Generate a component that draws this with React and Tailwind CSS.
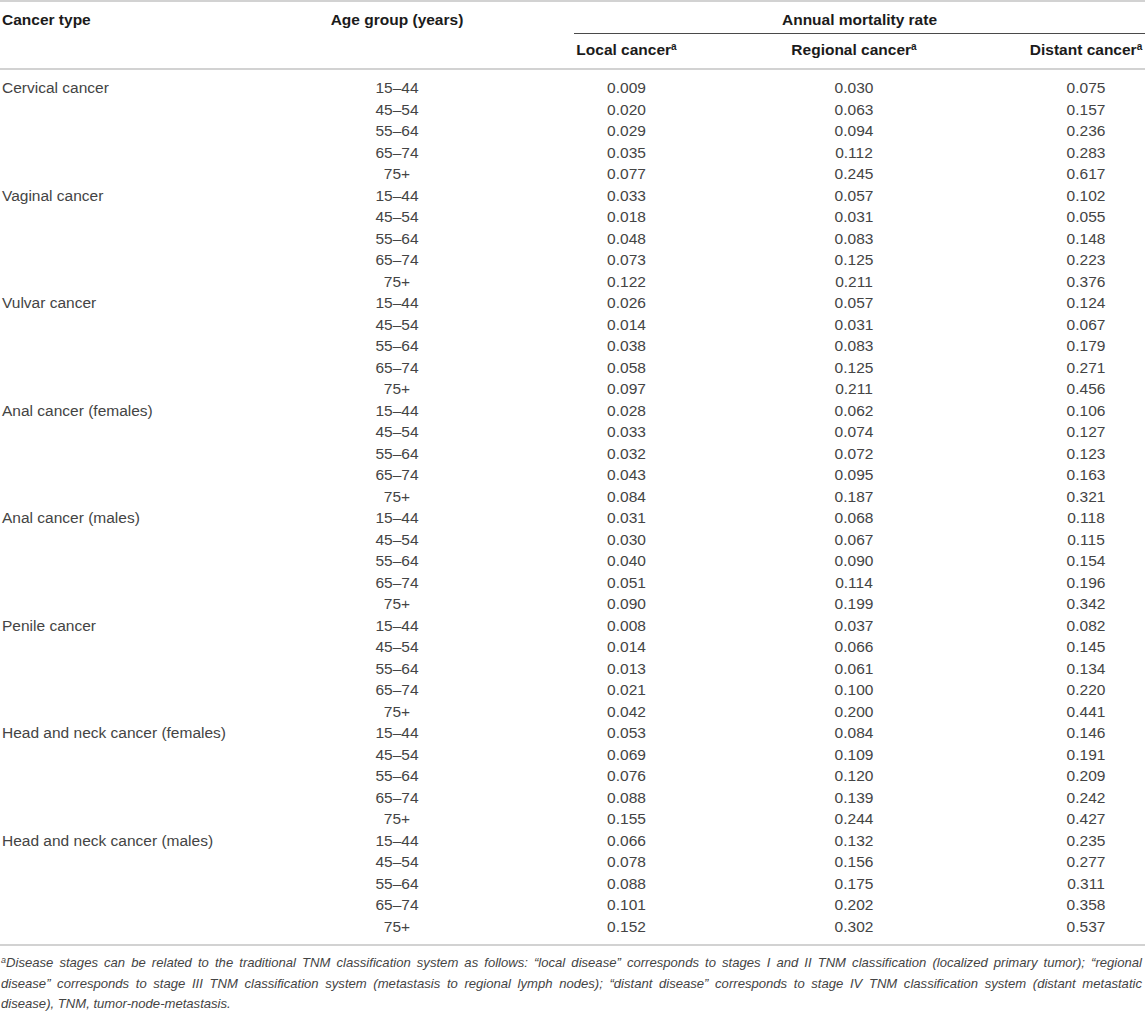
import React from "react";

const groups = [
  ["Cervical cancer", [
    ["0.009", "0.030", "0.075"], ["0.020", "0.063", "0.157"], ["0.029", "0.094", "0.236"], ["0.035", "0.112", "0.283"], ["0.077", "0.245", "0.617"]]],
  ["Vaginal cancer", [
    ["0.033", "0.057", "0.102"], ["0.018", "0.031", "0.055"], ["0.048", "0.083", "0.148"], ["0.073", "0.125", "0.223"], ["0.122", "0.211", "0.376"]]],
  ["Vulvar cancer", [
    ["0.026", "0.057", "0.124"], ["0.014", "0.031", "0.067"], ["0.038", "0.083", "0.179"], ["0.058", "0.125", "0.271"], ["0.097", "0.211", "0.456"]]],
  ["Anal cancer (females)", [
    ["0.028", "0.062", "0.106"], ["0.033", "0.074", "0.127"], ["0.032", "0.072", "0.123"], ["0.043", "0.095", "0.163"], ["0.084", "0.187", "0.321"]]],
  ["Anal cancer (males)", [
    ["0.031", "0.068", "0.118"], ["0.030", "0.067", "0.115"], ["0.040", "0.090", "0.154"], ["0.051", "0.114", "0.196"], ["0.090", "0.199", "0.342"]]],
  ["Penile cancer", [
    ["0.008", "0.037", "0.082"], ["0.014", "0.066", "0.145"], ["0.013", "0.061", "0.134"], ["0.021", "0.100", "0.220"], ["0.042", "0.200", "0.441"]]],
  ["Head and neck cancer (females)", [
    ["0.053", "0.084", "0.146"], ["0.069", "0.109", "0.191"], ["0.076", "0.120", "0.209"], ["0.088", "0.139", "0.242"], ["0.155", "0.244", "0.427"]]],
  ["Head and neck cancer (males)", [
    ["0.066", "0.132", "0.235"], ["0.078", "0.156", "0.277"], ["0.088", "0.175", "0.311"], ["0.101", "0.202", "0.358"], ["0.152", "0.302", "0.537"]]],
];

const ages = ["15\u201344", "45\u201354", "55\u201364", "65\u201374", "75+"];

const cols = "grid grid-cols-[222px_350px_109px_346px_118px]";

function Sup() {
  return <sup className="text-[10px] leading-none">a</sup>;
}

export default function App() {
  return (
    <div className="w-[1145px] bg-white font-['Liberation_Sans',Arial,sans-serif] text-[15.5px]">
      <div className="border-t-2 border-[#d2d2d2]">
        <div className={`${cols} grid-rows-[auto_auto] border-b-2 border-[#d2d2d2] font-bold text-[#1b1b1b]`}>
          <div className="row-span-2 col-start-1 row-start-1 pl-[2px] pt-[7px] leading-[21.5px]">Cancer type</div>
          <div className="row-span-2 col-start-2 row-start-1 text-center pt-[7px] leading-[21.5px]">Age group (years)</div>
          <div className="col-start-3 col-span-3 row-start-1 pl-[2px]">
            <div className="border-b border-[#4a4a4a] text-center pt-[7px] pb-[2px] leading-[21.5px]">Annual mortality rate</div>
          </div>
          <div className="col-start-3 row-start-2 text-center pt-[5px] pb-[8px] leading-[21.5px] whitespace-nowrap">Local cancer<Sup /></div>
          <div className="col-start-4 row-start-2 text-center pt-[5px] pb-[8px] leading-[21.5px] whitespace-nowrap">Regional cancer<Sup /></div>
          <div className="col-start-5 row-start-2 text-center pt-[5px] pb-[8px] leading-[21.5px] whitespace-nowrap">Distant cancer<Sup /></div>
        </div>
        <div className="pt-[7px] pb-[7px] border-b-2 border-[#d2d2d2] text-[#444]">
          {groups.map(([name, rows]) =>
            rows.map((r, i) => (
              <div key={name + i} className={`${cols} leading-[21.5px] h-[21.5px]`}>
                <div className="pl-[2px] whitespace-nowrap">{i === 0 ? name : ""}</div>
                <div className="text-center">{ages[i]}</div>
                <div className="text-center">{r[0]}</div>
                <div className="text-center">{r[1]}</div>
                <div className="text-center">{r[2]}</div>
              </div>
            ))
          )}
        </div>
        <div className="pt-[7px] pl-[1px] pr-[3px] italic text-[13.1px] leading-[20.5px] text-[#444]">
          <div className="whitespace-nowrap text-justify [text-align-last:justify]">
            <sup className="text-[9px] leading-none">a</sup>Disease stages can be related to the traditional TNM classification system as follows: “local disease” corresponds to stages I and II TNM classification (localized primary tumor); “regional
          </div>
          <div className="whitespace-nowrap text-justify [text-align-last:justify]">
            disease” corresponds to stage III TNM classification system (metastasis to regional lymph nodes); “distant disease” corresponds to stage IV TNM classification system (distant metastatic
          </div>
          <div className="whitespace-nowrap">disease), TNM, tumor-node-metastasis.</div>
        </div>
      </div>
    </div>
  );
}
